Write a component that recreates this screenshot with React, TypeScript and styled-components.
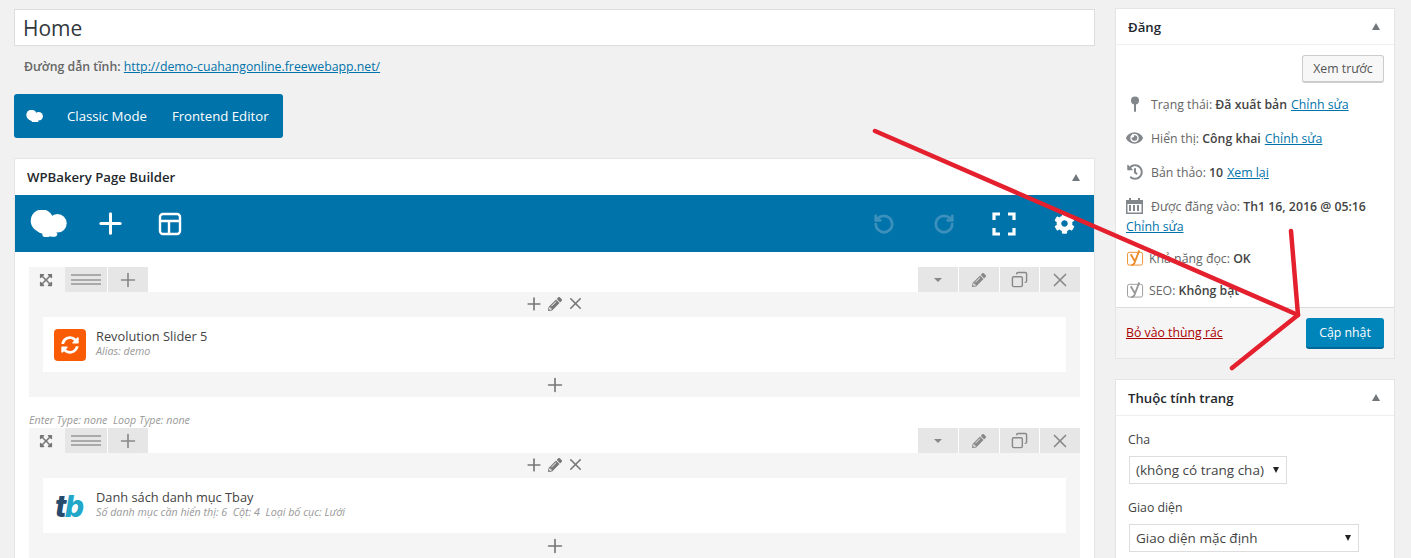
import React from "react";
import styled, { createGlobalStyle } from "styled-components";
import { Plus, X, Copy, RotateCcw, RotateCw } from "lucide-react";
import { FaCog, FaEye, FaHistory, FaPencilAlt, FaSyncAlt, FaExpandArrowsAlt } from "react-icons/fa";

const Global = createGlobalStyle`
  html, body { margin: 0; height: 558px; overflow: hidden; background: #f1f1f1; }
  body { font-family: "Open Sans", "Noto Sans", sans-serif; font-size: 12.3px; color: #444; }
  #root { position: relative; }
`;

const Page = styled.div`
  display: flex; gap: 20px; padding: 9px 16px 0 14px; height: 549px; overflow: hidden;
`;
const Main = styled.main`width: 1081px; flex: none;`;
const Side = styled.aside`width: 280px; flex: none;`;

const TitleInput = styled.input`
  display: block; box-sizing: border-box; width: 100%; height: 37px; padding: 0 8px;
  font: 400 21px "Open Sans", sans-serif; color: #32373c; background: #fff;
  border: 1px solid #ddd; outline: none;
`;
const Permalink = styled.div`
  margin: 12px 0 0 10px; height: 18px; line-height: 18px; color: #666;
  b { font-weight: 600; }
`;
const Link = styled.a<{ $red?: boolean }>`
  color: ${p => (p.$red ? "#a00" : "#0073aa")}; text-decoration: underline;
`;
const ModeBar = styled.div`
  display: flex; width: 269px; box-sizing: border-box; align-items: center; height: 44px; margin-top: 18px; padding: 0 12px;
  background: #0073aa; color: #fff; border-radius: 3px; font-size: 13.2px; gap: 25px;
`;
const ModeLogo = styled.span`display: flex; margin-right: -1px;`;

const Card = styled.section<{ $top?: number }>`
  background: #fff; box-shadow: 0 0 0 1px #e5e5e5; margin: ${p => p.$top ?? 0}px 1px 0;
`;
const BuilderCard = styled(Card)`margin: 21px 1px 0; height: 420px; overflow: hidden;`;
const CardHead = styled.header`
  display: flex; justify-content: space-between; align-items: center; height: 36px;
  padding: 0 14px 0 12px; font-size: 13.2px; font-weight: 600; color: #23282d;
`;
const SideHead = styled(CardHead)`border-bottom: 1px solid #eee; height: 35px;`;
const Caret = styled.i`
  width: 0; height: 0; border: 4.5px solid transparent; border-top: 0; border-bottom: 7px solid #72777c;
`;
const Toolbar = styled.div`
  display: flex; align-items: center; height: 57px; background: #0073aa; color: #fff;
  padding: 0 0 0 14px;
`;
const ToolSlot = styled.span<{ $w: number; $dim?: boolean }>`
  width: ${p => p.$w}px; display: flex; justify-content: center; align-items: center;
  color: ${p => (p.$dim ? "#3c90bc" : "#fff")};
`;
const Spacer = styled.span`flex: 1;`;

const Rows = styled.div`padding: 15px 14px 0;`;
const Meta = styled.div`
  height: 15px; line-height: 15px; margin-top: 16px; font-size: 10.7px; font-style: italic; color: #999;
`;
const RowHead = styled.div`display: flex; height: 25px;`;
const Handle = styled.span`
  width: 36px; background: #f5f5f5; display: flex; align-items: center; justify-content: center;
  padding-right: 2px; box-sizing: border-box; color: #777;
`;
const Tab = styled.span<{ $w: number }>`
  width: ${p => p.$w}px; background: #e6e6e6; margin-right: 1px; display: flex;
  align-items: center; justify-content: center; color: #888;
`;
const Lines = styled.span`
  display: block; width: 30px; height: 11px; border-top: 2px solid #aaa; border-bottom: 2px solid #aaa;
  position: relative; box-sizing: border-box;
  &::after { content: ""; position: absolute; left: 0; right: 0; top: 2.5px; height: 2px; background: #aaa; }
`;
const Ctl = styled.span`
  width: 39.75px; background: #e6e6e6; margin-left: 1px; display: flex;
  align-items: center; justify-content: center; color: #888;
`;
const FlippedCopy = styled(Copy)`transform: scaleX(-1);`;
const DownCaret = styled.i`
  width: 0; height: 0; border: 4px solid transparent; border-bottom: 0; border-top: 4px solid #888;
`;
const RowBody = styled.div`
  background: #f5f5f5; padding: 0 14px; display: flex; flex-direction: column;
`;
const InnerTools = styled.div`
  height: 25px; padding-bottom: 2px; box-sizing: border-box; display: flex; align-items: center; justify-content: center; gap: 4px; color: #777;
`;
const Elem = styled.div`
  display: flex; align-items: center; height: 55px; background: #fff; padding-left: 11px; gap: 10px;
`;
const ElemText = styled.div`margin-top: -3px;`;
const RevIcon = styled.span`
  width: 32px; height: 32px; border-radius: 4px; background: #f95c05; color: #fff;
  display: flex; align-items: center; justify-content: center;
`;
const TbLogo = styled.span`
  width: 32px; margin-left: 1px; margin-right: -1px; font: italic 800 30px/32px Inter, sans-serif; letter-spacing: -1.5px; color: #264b6d;
  b { color: #22a7c9; font-weight: 800; }
`;
const ElemName = styled.div`font-size: 12.8px; line-height: 16px; color: #444;`;
const ElemSub = styled.div`font-size: 10.7px; line-height: 15px; font-style: italic; color: #999;`;
const Bottom = styled.div`height: 25px; display: flex; align-items: center; justify-content: center; color: #777;`;

const PubBody = styled.div`padding: 10px 10px 0; height: 252px;`;
const PreviewRow = styled.div`display: flex; justify-content: flex-end;`;
const Preview = styled.span`
  box-sizing: border-box; width: 82px; height: 28px; border: 1px solid #ccc; border-bottom-width: 2px;
  border-radius: 3px; background: #f7f7f7; color: #555; display: flex; align-items: center; justify-content: center;
`;
const Status = styled.div<{ $top: number }>`
  display: flex; align-items: center; gap: 8px; height: 18px; margin-top: ${p => p.$top}px; color: #666;
  b { font-weight: 600; color: #444; }
  a { margin-left: -4px; }
`;
const Ico = styled.span`width: 17px; flex: none; display: flex; justify-content: center; color: #82878c;`;
const Wrap = styled.div`margin-top: 3px; height: 18px; line-height: 18px;`;
const SeoIcon = styled.span`width: 17px; flex: none; display: flex; margin: 0 -3px 0 1px;`;
const PubFoot = styled.footer`
  display: flex; justify-content: space-between; align-items: center; height: 51px; box-sizing: border-box;
  background: #f5f5f5; border-top: 1px solid #ddd; padding: 0 10px;
  a { margin-top: -2px; }
`;
const Update = styled.span`
  box-sizing: border-box; width: 78px; height: 31px; background: #0085ba; color: #fff; border-radius: 3px;
  border-bottom: 2px solid #006799; display: flex; align-items: center; justify-content: center;
`;
const AttrBody = styled.div`padding: 15px 12px 0; height: 200px;`;
const Label = styled.div<{ $top?: number }>`height: 18px; line-height: 18px; margin-top: ${p => p.$top ?? 0}px; color: #444;`;
const Sel = styled.div<{ $w: number }>`
  box-sizing: border-box; width: ${p => p.$w}px; height: 28px; margin: 7px 0 0 1px; padding: 0 6px;
  border: 1px solid #ddd; background: #fff; color: #444; font-size: 13.5px; display: flex; align-items: center; justify-content: space-between;
  white-space: nowrap;
  &::after { content: ""; width: 0; height: 0; border: 3.5px solid transparent; border-bottom: 0; border-top: 6px solid #222; margin-right: 1px; }
`;
const Overlay = styled.svg`position: absolute; left: 0; top: 0; pointer-events: none;`;

const Cloud = ({ s }: { s: number }) => (
  <svg width={s} height={s * 0.75} viewBox="0 0 36 27" fill="#fff">
    <circle cx="11.700" cy="10.500" r="11" />
    <circle cx="26.700" cy="13" r="9" />
    <ellipse cx="17" cy="18" rx="11" ry="6" />
    <ellipse cx="16" cy="24" rx="4" ry="2.500" />
    <ellipse cx="22.500" cy="23.500" rx="4" ry="2.500" />
  </svg>
);
const Layout = () => (
  <svg width="24" height="24" viewBox="0 0 24 24" fill="none" stroke="#fff" strokeWidth="2.4">
    <rect x="2" y="2" width="20" height="20" rx="3" /><path d="M2 9h20M11 9v13" />
  </svg>
);
const Full = () => (
  <svg width="24" height="24" viewBox="0 0 24 24" fill="none" stroke="#fff" strokeWidth="3.2">
    <path d="M2 8V2h6M16 2h6v6M22 16v6h-6M8 22H2v-6" />
  </svg>
);
const Pin = () => (
  <svg width="10" height="16" viewBox="0 0 10 16" fill="#82878c">
    <circle cx="5" cy="4.500" r="4" /><rect x="4" y="7" width="2" height="9" rx="1" />
  </svg>
);
const Calendar = () => (
  <svg width="17" height="16" viewBox="0 0 17 16" fill="#82878c">
    <path d="M0 2h3V0h2v2h7V0h2v2h3v14H0zM1.500 6v8.500h14V6z" />
    <path d="M3 7h2v6H3zM7 7h2v6H7zM11 7h2v6h-2z" />
  </svg>
);
const Yoast = ({ c }: { c: string }) => (
  <svg width="18" height="18" viewBox="0 0 18 18" fill="none" stroke={c}>
    <rect x=".5" y="3" width="16" height="13.500" rx="2" strokeWidth="1" />
    <path d="M4 5l4 7M13 1L8 14c-.5 1.500-2 2.500-3.500 2.500" strokeWidth="2" />
  </svg>
);

const Controls = () => (
  <>
    <Spacer />
    <Ctl><DownCaret /></Ctl>
    <Ctl><FaPencilAlt size={14} /></Ctl>
    <Ctl><FlippedCopy size={17} /></Ctl>
    <Ctl><X size={22} strokeWidth={1.8} /></Ctl>
  </>
);
const Row = ({ children }: { children: React.ReactNode }) => (
  <>
    <RowHead>
      <Handle><FaExpandArrowsAlt size={14} /></Handle>
      <Tab $w={42}><Lines /></Tab>
      <Tab $w={40}><Plus size={22} strokeWidth={1.8} /></Tab>
      <Controls />
    </RowHead>
    <RowBody>
      <InnerTools><Plus size={20} /><FaPencilAlt size={14} /><X size={19} /></InnerTools>
      <Elem>{children}</Elem>
      <Bottom><Plus size={22} strokeWidth={1.8} /></Bottom>
    </RowBody>
  </>
);

export default function App() {
  return (
    <>
      <Global />
      <Page>
        <Main>
          <TitleInput defaultValue="Home" readOnly />
          <Permalink><b>Đường dẫn tĩnh:</b> <Link>http://demo-cuahangonline.freewebapp.net/</Link></Permalink>
          <ModeBar>
            <ModeLogo><Cloud s={17} /></ModeLogo>
            <span>Classic Mode</span>
            <span>Frontend Editor</span>
          </ModeBar>
          <BuilderCard>
            <CardHead>WPBakery Page Builder<Caret /></CardHead>
            <Toolbar>
              <ToolSlot $w={38}><Cloud s={37} /></ToolSlot>
              <ToolSlot $w={86}><Plus size={33} strokeWidth={2.2} /></ToolSlot>
              <ToolSlot $w={34}><Layout /></ToolSlot>
              <Spacer />
              <ToolSlot $w={60} $dim><RotateCcw size={22} strokeWidth={3} /></ToolSlot>
              <ToolSlot $w={60} $dim><RotateCw size={22} strokeWidth={3} /></ToolSlot>
              <ToolSlot $w={60}><Full /></ToolSlot>
              <ToolSlot $w={60}><FaCog size={21} /></ToolSlot>
            </Toolbar>
            <Rows>
              <Row>
                <RevIcon><FaSyncAlt size={18} /></RevIcon>
                <ElemText><ElemName>Revolution Slider 5</ElemName><ElemSub>Alias: demo</ElemSub></ElemText>
              </Row>
              <Meta>Enter Type: none&nbsp; Loop Type: none</Meta>
              <Row>
                <TbLogo>t<b>b</b></TbLogo>
                <ElemText><ElemName>Danh sách danh mục Tbay</ElemName><ElemSub>Số danh mục cần hiển thị: 6&nbsp; Cột: 4&nbsp; Loại bố cục: Lưới</ElemSub></ElemText>
              </Row>
            </Rows>
          </BuilderCard>
        </Main>
        <Side>
          <Card>
            <SideHead>Đăng<Caret /></SideHead>
            <PubBody>
              <PreviewRow><Preview>Xem trước</Preview></PreviewRow>
              <Status $top={12}><Ico><Pin /></Ico><span>Trạng thái: <b>Đã xuất bản</b></span><Link>Chỉnh sửa</Link></Status>
              <Status $top={16}><Ico><FaEye size={18} /></Ico><span>Hiển thị: <b>Công khai</b></span><Link>Chỉnh sửa</Link></Status>
              <Status $top={16}><Ico><FaHistory size={16} /></Ico><span>Bản thảo: <b>10</b></span><Link>Xem lại</Link></Status>
              <Status $top={16}><Ico><Calendar /></Ico><span>Được đăng vào: <b>Th1 16, 2016 @ 05:16</b></span></Status>
              <Wrap><Link>Chỉnh sửa</Link></Wrap>
              <Status $top={13}><SeoIcon><Yoast c="#ee8c2c" /></SeoIcon><span>Khả năng đọc: <b>OK</b></span></Status>
              <Status $top={14}><SeoIcon><Yoast c="#999" /></SeoIcon><span>SEO: <b>Không bật</b></span></Status>
            </PubBody>
            <PubFoot><Link $red>Bỏ vào thùng rác</Link><Update>Cập nhật</Update></PubFoot>
          </Card>
          <Card $top={22}>
            <SideHead>Thuộc tính trang<Caret /></SideHead>
            <AttrBody>
              <Label>Cha</Label>
              <Sel $w={158}>(không có trang cha)</Sel>
              <Label $top={15}>Giao diện</Label>
              <Sel $w={230}>Giao diện mặc định</Sel>
            </AttrBody>
          </Card>
        </Side>
      </Page>
      <Overlay width="1411" height="558" viewBox="0 0 1411 558" fill="none" stroke="#e4202e" strokeWidth="4.5" strokeLinecap="round" strokeLinejoin="round">
        <path d="M875 131L1298 315" />
        <path d="M1291 231L1298 315L1232 368" />
      </Overlay>
    </>
  );
}
